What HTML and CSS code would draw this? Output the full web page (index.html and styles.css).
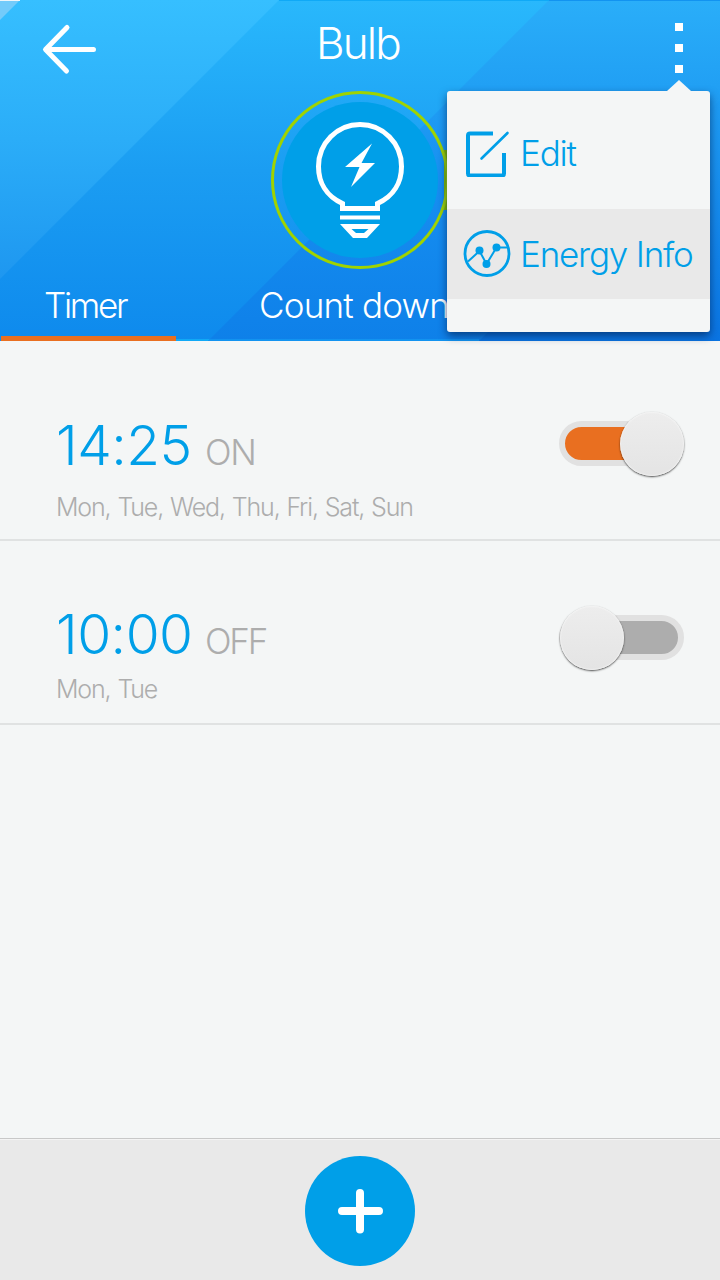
FILE: index.html
```html
<!DOCTYPE html>
<html lang="en">
<head>
<meta charset="utf-8">
<title>Bulb</title>
<link rel="stylesheet" href="styles.css">
</head>
<body>
<div class="screen">
  <header class="header">
    <svg class="backdrop" width="720" height="341" viewBox="0 0 720 341">
      <defs>
        <linearGradient id="b1" gradientUnits="userSpaceOnUse" x1="0" y1="0" x2="0" y2="279"><stop offset="0" stop-color="#36bfff"/><stop offset=".5" stop-color="#2badf8"/><stop offset="1" stop-color="#1e97f0"/></linearGradient>
        <linearGradient id="b2" gradientUnits="userSpaceOnUse" x1="0" y1="0" x2="0" y2="341"><stop offset="0" stop-color="#29b8fc"/><stop offset=".5" stop-color="#1b9df2"/><stop offset="1" stop-color="#0e8aed"/></linearGradient>
        <linearGradient id="b3" gradientUnits="userSpaceOnUse" x1="0" y1="0" x2="0" y2="341"><stop offset="0" stop-color="#2aaef9"/><stop offset=".25" stop-color="#21a0f4"/><stop offset=".55" stop-color="#168ef0"/><stop offset="1" stop-color="#0e80e9"/></linearGradient>
        <linearGradient id="b4" gradientUnits="userSpaceOnUse" x1="0" y1="97" x2="0" y2="341"><stop offset="0" stop-color="#1e9cf3"/><stop offset="1" stop-color="#0a74e2"/></linearGradient>
      </defs>
      <path d="M0 0H720V341H0z" fill="url(#b3)"/>
      <path d="M720 100V341H479z" fill="url(#b4)"/>
      <path d="M0 0H549L208 341H0z" fill="url(#b2)"/>
      <path d="M0 0H279L0 279z" fill="url(#b1)"/>
      <path d="M0 0H20L0 20z" fill="#73cbfa"/>
      <path d="M0 0H20V1H0z" fill="#eef6fa"/>
      <path d="M279 0H549V1H279zM176 339H210L208 341H176z" fill="#10a9f6"/>
      <path d="M549 0H720V1H549zM210 339H479V341H208z" fill="#1293f0"/>
    </svg>
    <div class="bar">
      <svg class="back" width="54" height="52" viewBox="0 0 54 52"><path d="M25 4.500L3.500 26.500L24.500 48M4 26.500H51.500" fill="none" stroke="#fff" stroke-width="5" stroke-linecap="round" stroke-linejoin="round"/></svg>
      <h1 class="title"><span>Bulb</span></h1>
      <div class="more"><i></i><i></i><i></i></div>
    </div>
    <svg class="bulb" width="200" height="180" viewBox="260 90 200 180">
      <path d="M444 150H460V210H444z" fill="#81b900"/>
      <circle cx="360" cy="180" r="87.500" fill="none" stroke="#a0d300" stroke-width="3"/>
      <circle cx="360" cy="180" r="78" fill="#009fe8"/>
      <path d="M342.500 208.500V203.500C326 196 318.500 182 318.500 166.500A41.500 42 0 0 1 401.500 166.500C401.500 182 394 196 377.500 203.500V208.500Z" fill="none" stroke="#fff" stroke-width="5"/>
      <path d="M372 143.500L345 167H359.500L351 187L375 163H361.500Z" fill="#fff"/>
      <path d="M340 215.500H380V219.500H340z" fill="#fff"/>
      <path fill-rule="evenodd" d="M340 224H380L367 238H353zM351.500 229L356 233H364L368.500 229z" fill="#fff"/>
    </svg>
    <nav class="tabs">
      <a class="tab active"><span>Timer</span></a>
      <a class="tab count"><span>Count down</span></a>
    </nav>
    <div class="menu">
      <a class="item edit">
        <svg width="48" height="50" viewBox="0 0 48 50" fill="none" stroke="#009fe8"><path d="M30 6.500H7Q5 6.500 5 8.500V46.500Q5 48.500 7 48.500H39Q41 48.500 41 46.500V26" stroke-width="4"/><path d="M18.500 31.500L44.500 6" stroke-width="2.600" stroke-linecap="round"/></svg>
        <span>Edit</span>
      </a>
      <a class="item energy">
        <svg width="48" height="48" viewBox="0 0 48 48" fill="none" stroke="#009fe8"><circle cx="24" cy="23.500" r="22" stroke-width="2.800"/><path d="M5 31.500L16.500 21L23.500 34L33.500 17.500H45" stroke-width="2"/><g fill="#009fe8" stroke="none"><circle cx="16.500" cy="20.500" r="4"/><circle cx="23.500" cy="34" r="4"/><circle cx="33.500" cy="17.500" r="4"/></g></svg>
        <span>Energy Info</span>
      </a>
    </div>
  </header>
  <main class="timers">
    <section class="timer first">
      <div class="info">
        <div class="when"><span class="time">14:25</span><span class="state">ON</span></div>
        <div class="days"><span>Mon, Tue, Wed, Thu, Fri, Sat, Sun</span></div>
      </div>
      <div class="switch on"><div class="track"></div><div class="knob"></div></div>
    </section>
    <section class="timer second">
      <div class="info">
        <div class="when"><span class="time">10:00</span><span class="state">OFF</span></div>
        <div class="days"><span>Mon, Tue</span></div>
      </div>
      <div class="switch"><div class="track"></div><div class="knob"></div></div>
    </section>
  </main>
  <footer class="footer">
    <div class="add"><svg width="46" height="46" viewBox="0 0 46 46"><path d="M23 5V41.500M5 23H42" stroke="#fff" stroke-width="8" stroke-linecap="round"/></svg></div>
  </footer>
</div>
</body>
</html>
```
FILE: styles.css
```css
* { box-sizing: border-box; }
body { margin: 0; font-family: Inter, "Liberation Sans", sans-serif; font-weight: 300; }
.screen { width: 720px; height: 1280px; display: flex; flex-direction: column; background: #f4f6f6; overflow: hidden; }
.screen span { white-space: nowrap; }
.header { position: relative; z-index: 0; flex: none; height: 341px; color: #fff; display: flex; flex-direction: column; align-items: center; }
.backdrop { position: absolute; inset: 0; z-index: -1; }
.bar { width: 100%; height: 90px; padding: 23px 36px 0 42px; display: flex; justify-content: space-between; align-items: flex-start; }
.back { width: 54px; }
.title { margin: -7px 0 0; font-size: 44px; line-height: 54px; font-weight: 300; letter-spacing: -1.800px; }
.more { width: 64px; display: flex; flex-direction: column; align-items: flex-end; gap: 13px; padding-right: 1px; }
.more i { width: 8px; height: 8px; background: #fff; }
.bulb { flex: none; }
.tabs { width: 100%; height: 71px; display: flex; gap: 82px; padding-left: 1px; }
.tab { height: 71px; font-size: 35px; line-height: 70px; letter-spacing: -2.300px; }
.tab.active { width: 175px; padding-left: 43px; border-bottom: 5px solid #e96f20; }
.count { letter-spacing: -.800px; padding-left: 1px; }
.menu {
  position: absolute; left: 447px; top: 91px; width: 263px; height: 241px;
  display: flex; flex-direction: column; background: #f4f6f6; border-radius: 3px;
  box-shadow: 0 4px 9px rgba(0,30,80,.65); color: #009fe8;
}
.menu::before { content: ""; position: absolute; left: 220px; top: -11px; border: 12.500px solid transparent; border-top: 0; border-bottom: 11px solid #f4f6f6; }
.item { display: flex; align-items: center; font-size: 35px; line-height: 44px; }
.edit { height: 118px; padding: 4px 0 0 16px; gap: 9px; letter-spacing: -1.200px; }
.edit span { padding-top: 2px; }
.energy { height: 90px; background: #e9e9e9; padding-left: 16px; gap: 9px; letter-spacing: -1.200px; }
.timers { flex: 1; }
.timer { display: flex; justify-content: space-between; padding: 0 35px 0 56px; border-bottom: 2px solid #e0e2e2; }
.first { height: 200px; padding-top: 70px; }
.second { height: 184px; padding-top: 64px; }
.when { display: flex; align-items: baseline; height: 66px; line-height: 66px; margin-top: 1px; }
.second .when { margin-top: -4px; }
.time { width: 149px; font-size: 55px; letter-spacing: -.500px; color: #009fe8; }
.state { font-size: 35px; color: #adadad; letter-spacing: -1.300px; }
.second .state { letter-spacing: -2.200px; }
.days { margin-top: 13px; font-size: 25px; line-height: 32px; letter-spacing: -1.150px; word-spacing: 1px; color: #adadad; }
.second .days { margin-top: 6px; }
.switch { position: relative; width: 126px; height: 66px; padding-top: 10px; }
.track { width: 125px; height: 45px; border: 6px solid #e1e1e1; border-radius: 23px; background: #adadad; }
.on .track { background: #e96f20; }
.knob { position: absolute; left: 1px; top: 1px; width: 64px; height: 64px; border-radius: 50%; background: linear-gradient(#ededed, #e4e4e4); box-shadow: 0 1px 2px rgba(0,0,0,.7), inset 0 0 2px #fff; }
.on .knob { left: 61px; }
.footer { flex: none; height: 142px; border-top: 1px solid #c8c8c8; background: #e9e9e9; box-shadow: inset 0 1px #f4f4f4; display: flex; justify-content: center; padding-top: 17px; }
.add { width: 110px; height: 110px; border-radius: 50%; background: #009fe8; display: flex; align-items: center; justify-content: center; }
```
